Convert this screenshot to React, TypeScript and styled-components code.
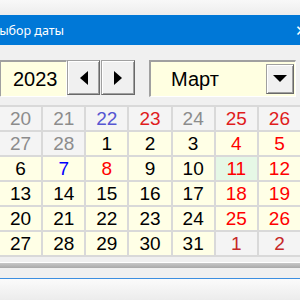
import * as React from "react";
import styled, { createGlobalStyle } from "styled-components";

const GlobalStyle = createGlobalStyle`
	html, body {
		margin: 0;
		padding: 0;
		width: 300px;
		height: 300px;
		overflow: hidden;
		background: #f0f0f0;
	}
	#root {
		width: 300px;
		height: 300px;
	}
`;

const StyledScreen = styled.div`
	width: 300px;
	height: 300px;
	display: flex;
	flex-direction: column;
	overflow: hidden;
	font-family: "Liberation Sans", Arial, sans-serif;
	background: #f0f0f0;
`;

const StyledFrameTop = styled.div`
	height: 15px;
	background: linear-gradient(#f8f8f8, #ededed);
`;

const StyledTitleBar = styled.div`
	height: 30px;
	background: #0078d7;
	color: #fff;
	display: flex;
	align-items: center;
	justify-content: space-between;
	font-family: "Noto Sans", sans-serif;
	font-size: 12.5px;
	white-space: nowrap;
`;

const StyledTitle = styled.span`
	margin-left: -9px;
`;

const StyledClose = styled.span`
	margin-right: -8px;
	font-size: 15px;
`;

const StyledBody = styled.div`
	padding-top: 15px;
	display: flex;
	flex-direction: column;
`;

const StyledControls = styled.div`
	display: flex;
	height: 37px;
`;

const StyledSunken = styled.div`
	box-sizing: border-box;
	border-style: solid;
	border-width: 2px 1px 1px 2px;
	border-color: #a0a0a0 #ffffff #ffffff #a0a0a0;
	background: #ffffe1;
	font-size: 20px;
	color: #000;
	display: flex;
	align-items: center;
`;

const StyledYear = styled(StyledSunken)`
	width: 68px;
	margin-left: -1px;
	padding-left: 12px;
`;

const StyledMonth = styled(StyledSunken)`
	width: 147px;
	margin-left: 14px;
	padding-left: 20px;
	padding-right: 1px;
	justify-content: space-between;
`;

const StyledButton = styled.div<{ $w: number; $h: number }>`
	box-sizing: border-box;
	width: ${(p) => p.$w}px;
	height: ${(p) => p.$h}px;
	background: #f0f0f0;
	border: 1px solid #a0a0a0;
	border-right-color: #696969;
	border-bottom-color: #696969;
	box-shadow: inset 1px 1px 0 #ffffff, inset -1px -1px 0 #a0a0a0;
	display: flex;
	align-items: center;
	justify-content: center;
`;

const StyledNavButtons = styled.div`
	display: flex;
	gap: 1px;
	height: 35px;
`;

const StyledGrid = styled.div`
	margin-top: 8px;
	display: grid;
	grid-template-columns: repeat(7, 1fr);
	grid-auto-rows: 23px;
	gap: 2px;
	padding: 2px 0;
	background: #d9d9d9;
`;

type Fill = "other" | "month" | "today";
type Tone = "plain" | "muted" | "blue" | "mutedBlue" | "red" | "mutedRed" | "dimRed";

const fills: Record<Fill, string> = {
	other: "#f4f4f4",
	month: "#ffffe6",
	today: "#e6f8e6",
};

const tones: Record<Tone, string> = {
	plain: "#000000",
	muted: "#8c8c8c",
	blue: "#0000ff",
	mutedBlue: "#5656d2",
	red: "#ff0000",
	mutedRed: "#e01c1c",
	dimRed: "#c62828",
};

const StyledCell = styled.div<{ $fill: Fill; $tone: Tone }>`
	background: ${(p) => fills[p.$fill]};
	color: ${(p) => tones[p.$tone]};
	font-size: 19px;
	display: flex;
	align-items: center;
	justify-content: center;
`;

const StyledFooter = styled.div`
	margin-top: 5px;
	height: 5px;
	border-top: 1px solid #ffffff;
	background: linear-gradient(#c8c8c8, #a9a9a9);
`;

const StyledFooterGap = styled.div`
	height: 10px;
	background: #f0f0f0;
`;

const StyledBackWindow = styled.div`
	flex: 1;
	border-top: 1px solid #3d8fe0;
	background: linear-gradient(#fbfbfb, #ececec);
`;

type Day = [number, Fill, Tone];

const o = (d: number, t: Tone = "muted"): Day => [d, "other", t];
const m = (d: number, t: Tone = "plain"): Day => [d, "month", t];

const days: Day[] = [
	o(20), o(21), o(22, "mutedBlue"), o(23, "mutedRed"), o(24), o(25, "mutedRed"), o(26, "mutedRed"),
	o(27), o(28), m(1), m(2), m(3), m(4, "red"), m(5, "red"),
	m(6), m(7, "blue"), m(8, "red"), m(9), m(10), [11, "today", "red"], m(12, "red"),
	m(13), m(14), m(15), m(16), m(17), m(18, "red"), m(19, "red"),
	m(20), m(21), m(22), m(23), m(24), m(25, "red"), m(26, "red"),
	m(27), m(28), m(29), m(30), m(31), o(1, "dimRed"), o(2, "dimRed"),
];

const Triangle: React.FC<{ dir: "left" | "right" | "down" }> = ({ dir }) => {
	if (dir === "down") {
		return (
			<svg width="14" height="8" viewBox="0 0 14 8">
				<polygon points="0,0 14,0 7,7" fill="#000" />
			</svg>
		);
	}
	return (
		<svg width="8" height="14" viewBox="0 0 8 14">
			<polygon points={dir === "left" ? "8,0 8,14 0,7" : "0,0 0,14 8,7"} fill="#000" />
		</svg>
	);
};

const App: React.FC = () => {
	return (
		<StyledScreen>
			<GlobalStyle />
			<StyledFrameTop />
			<StyledTitleBar>
				<StyledTitle>Выбор даты</StyledTitle>
				<StyledClose>✕</StyledClose>
			</StyledTitleBar>
			<StyledBody>
				<StyledControls>
					<StyledYear>2023</StyledYear>
					<StyledNavButtons>
						<StyledButton $w={33} $h={35}>
							<Triangle dir="left" />
						</StyledButton>
						<StyledButton $w={34} $h={35}>
							<Triangle dir="right" />
						</StyledButton>
					</StyledNavButtons>
					<StyledMonth>
						Март
						<StyledButton $w={28} $h={30}>
							<Triangle dir="down" />
						</StyledButton>
					</StyledMonth>
				</StyledControls>
				<StyledGrid>
					{days.map(([d, fill, tone], i) => (
						<StyledCell key={i} $fill={fill} $tone={tone}>
							{d}
						</StyledCell>
					))}
				</StyledGrid>
				<StyledFooter />
				<StyledFooterGap />
			</StyledBody>
			<StyledBackWindow />
		</StyledScreen>
	);
};

export default App;
